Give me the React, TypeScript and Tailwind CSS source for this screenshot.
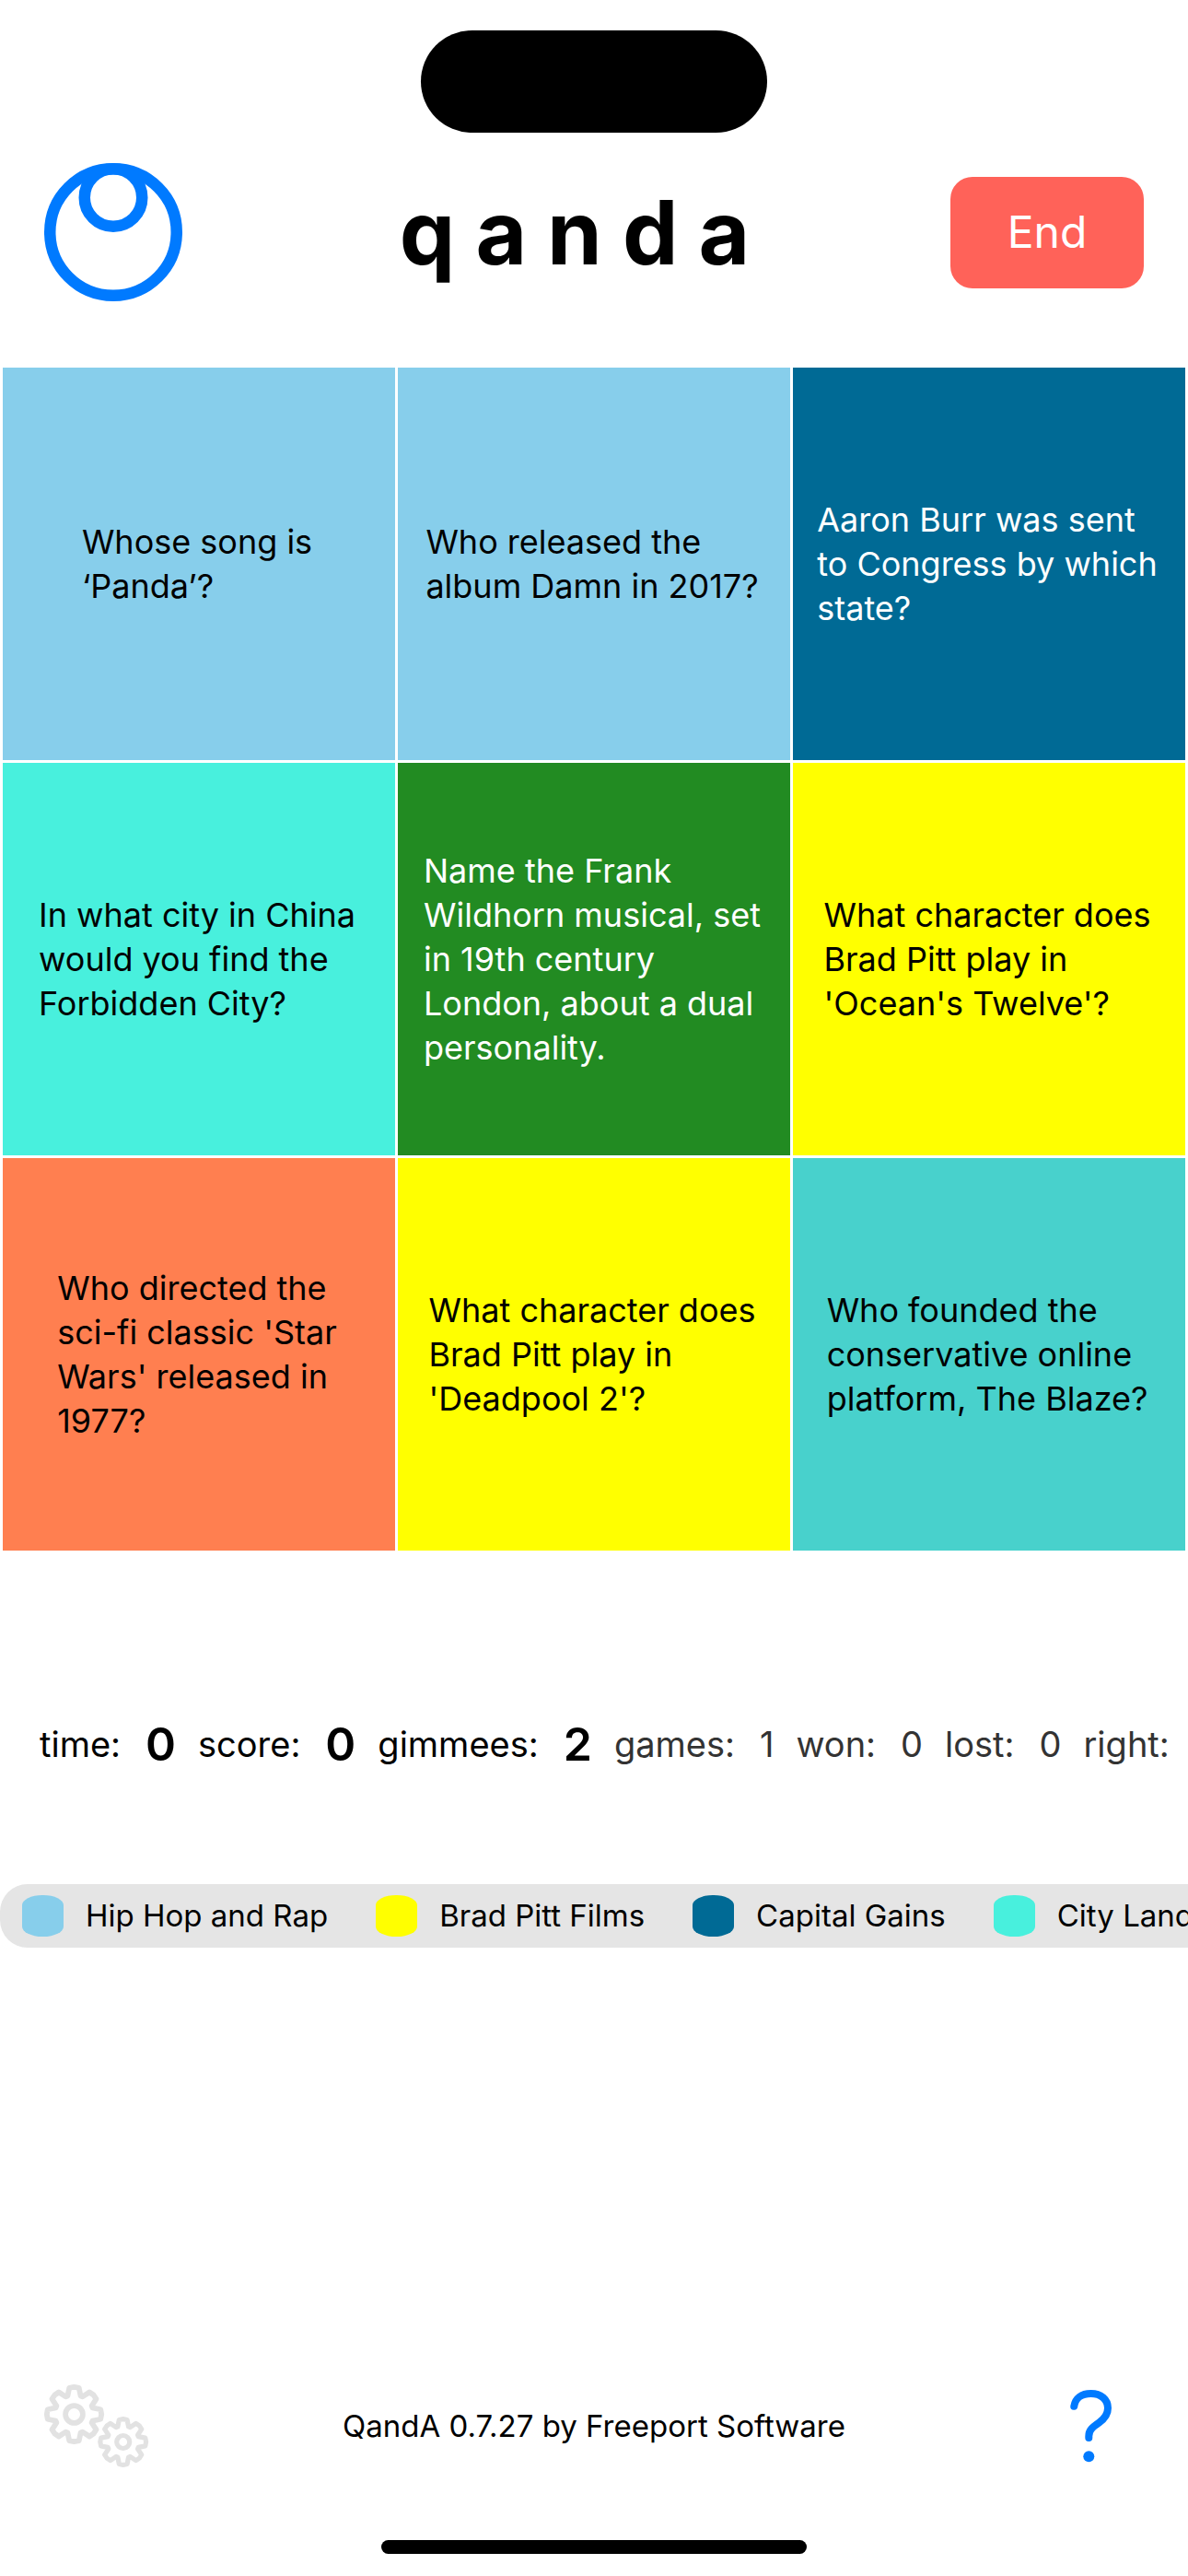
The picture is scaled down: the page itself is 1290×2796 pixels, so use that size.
import React from "react";

type Cell = { lines: string[]; tone: string };

const cells: Cell[] = [
  { lines: ["Whose song is", "‘Panda’?"], tone: "bg-[#87ceeb] text-black" },
  { lines: ["Who released the", "album Damn in 2017?"], tone: "bg-[#87ceeb] text-black" },
  { lines: ["Aaron Burr was sent", "to Congress by which", "state?"], tone: "bg-[#006a95] text-white" },
  { lines: ["In what city in China", "would you find the", "Forbidden City?"], tone: "bg-[#48f0dd] text-black" },
  {
    lines: ["Name the Frank", "Wildhorn musical, set", "in 19th century", "London, about a dual", "personality."],
    tone: "bg-[#228b22] text-white",
  },
  { lines: ["What character does", "Brad Pitt play in", "'Ocean's Twelve'?"], tone: "bg-[#ffff00] text-black" },
  { lines: ["Who directed the", "sci-fi classic 'Star", "Wars' released in", "1977?"], tone: "bg-[#ff7f50] text-black" },
  { lines: ["What character does", "Brad Pitt play in", "'Deadpool 2'?"], tone: "bg-[#ffff00] text-black" },
  { lines: ["Who founded the", "conservative online", "platform, The Blaze?"], tone: "bg-[#48d1cc] text-black" },
];

const stats: { label: string; value?: string; strong: boolean }[] = [
  { label: "time:", value: "0", strong: true },
  { label: "score:", value: "0", strong: true },
  { label: "gimmees:", value: "2", strong: true },
  { label: "games:", value: "1", strong: false },
  { label: "won:", value: "0", strong: false },
  { label: "lost:", value: "0", strong: false },
  { label: "right:", strong: false },
];

const topics = [
  { name: "Hip Hop and Rap", swatch: "bg-[#87ceeb]" },
  { name: "Brad Pitt Films", swatch: "bg-[#ffff00]" },
  { name: "Capital Gains", swatch: "bg-[#006a95]" },
  { name: "City Land", swatch: "bg-[#48f0dd]" },
];

function RingLogo() {
  return (
    <svg viewBox="0 0 150 150" className="size-[150px]" fill="none" stroke="#007aff" strokeWidth="12.5" aria-hidden="true">
      <circle cx="75" cy="75" r="68.75" />
      <circle cx="75" cy="37.5" r="31.25" />
    </svg>
  );
}

/* Outline of an eight-toothed gear, centred on the origin. */
function gearPath(outer: number, root: number) {
  const points: string[] = [];
  for (let i = 0; i < 8; i++) {
    const base = (i * Math.PI) / 4 - Math.PI / 2;
    const spots: [number, number][] = [
      [root, -0.34],
      [outer, -0.18],
      [outer + 0.5, 0],
      [outer, 0.18],
      [root, 0.34],
    ];
    for (const [r, a] of spots) {
      points.push(`${(r * Math.cos(base + a)).toFixed(2)} ${(r * Math.sin(base + a)).toFixed(2)}`);
    }
  }
  return `M${points.join("L")}Z`;
}

function Gears() {
  return (
    <svg viewBox="0 0 114 90" className="h-[90px] w-[114px]" fill="none" stroke="#e2e2e2" strokeLinejoin="round" aria-hidden="true">
      <g transform="translate(32.5 32.5)" strokeWidth="5.8">
        <path d={gearPath(29.2, 21.2)} />
        <circle r="9.4" />
      </g>
      <g transform="translate(85.7 62.5)" strokeWidth="5.2">
        <path d={gearPath(24.4, 17.6)} />
        <circle r="7" />
      </g>
    </svg>
  );
}

function QuestionMark() {
  return (
    <svg viewBox="0 0 46 79" className="h-[79px] w-[46px]" fill="none" aria-hidden="true">
      <path
        d="M4.3 17.8C5.5 9 12.5 4 22.5 4C33.5 4 41 10.3 41 19.8C41 27 37.5 31.2 31.5 35.5C24 40.7 20.3 43.6 20.3 50.2V52"
        stroke="#007aff"
        strokeWidth="8"
        strokeLinecap="round"
      />
      <circle cx="20.3" cy="72.3" r="6" fill="#007aff" />
    </svg>
  );
}

export default function App() {
  return (
    <div className="flex min-h-screen flex-col overflow-hidden bg-white font-['Inter',sans-serif] text-black">
      <div className="flex h-[177px] justify-center pt-[33px]">
        <div className="h-[111px] w-[376px] rounded-full bg-black" />
      </div>

      <header className="grid grid-cols-[1fr_auto_1fr] items-center px-12">
        <button type="button" aria-label="Home" className="justify-self-start">
          <RingLogo />
        </button>
        <h1 className="pr-5 text-[96px] leading-[120px] font-bold tracking-[22px]">qanda</h1>
        <button
          type="button"
          className="h-[121px] w-[210px] justify-self-end rounded-3xl bg-[#ff6259] text-[48px] leading-[60px] text-white"
        >
          End
        </button>
      </header>

      <main className="mt-[72px]">
        <div className="grid grid-cols-3 gap-[3px] px-[3px]">
          {cells.map((cell, i) => (
            <button
              key={i}
              type="button"
              className={`flex aspect-square items-center justify-center pr-1 text-left text-[36px] leading-[48px] ${cell.tone}`}
            >
              <span>
                {cell.lines.map((line) => (
                  <span key={line} className="block whitespace-nowrap">
                    {line}
                  </span>
                ))}
              </span>
            </button>
          ))}
        </div>

        <dl className="mt-[180px] flex h-[61px] items-center gap-6 pl-[43px] text-[38px] leading-[61px] whitespace-nowrap">
          {stats.map((stat) => (
            <div key={stat.label} className={`flex items-center gap-[27px] ${stat.strong ? "text-black" : "text-[#333333]"}`}>
              <dt>{stat.label}</dt>
              {stat.value && <dd className={stat.strong ? "text-[50px] font-semibold" : ""}>{stat.value}</dd>}
            </div>
          ))}
        </dl>

        <ul className="mt-[121px] flex h-[69px] w-full items-center gap-[52px] rounded-l-[30px] bg-[#e5e5e5] pl-6 text-[33px] leading-[45px] whitespace-nowrap">
          {topics.map((topic) => (
            <li key={topic.name} className="flex items-center gap-6">
              <span className={`size-[45px] rounded-[22px/11px] ${topic.swatch}`} />
              {topic.name}
            </li>
          ))}
        </ul>
      </main>

      <footer className="mt-auto">
        <div className="flex items-center justify-between px-12">
          <button type="button" aria-label="Settings">
            <Gears />
          </button>
          <p className="text-[33px] leading-[45px]">QandA 0.7.27 by Freeport Software</p>
          <button type="button" aria-label="Help" className="flex w-[114px] justify-center">
            <QuestionMark />
          </button>
        </div>
        <div className="mx-auto mt-[79px] mb-6 h-[15px] w-[462px] rounded-full bg-black" />
      </footer>
    </div>
  );
}
